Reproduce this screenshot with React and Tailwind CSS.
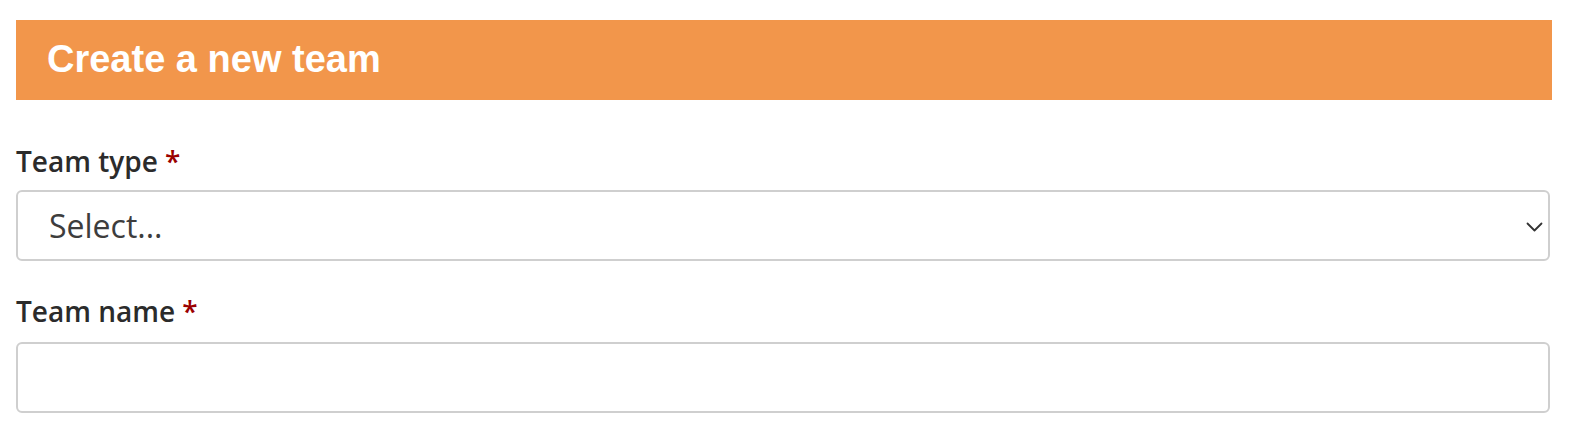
export default function App() {
  return (
    <div className="bg-white min-h-screen pt-5 pl-4 pr-[18px] font-['Open_Sans',sans-serif]">
      <div className="h-20 bg-[#f2964b] flex items-center px-[31px]">
        <h1 className="text-white text-[38px] leading-[38px] mb-[2px] font-bold font-['Liberation_Sans',sans-serif]">
          Create a new team
        </h1>
      </div>

      <div className="mt-[42px] pr-[2px]">
        <Label text="Team type" />
        <div className="mt-[10px] h-[71px] rounded-md border-2 border-[#cfcfcf] flex items-center justify-between pl-[31px] pr-[5px]">
          <span className="text-[32px] text-[#3d3d3d]">Select...</span>
          <svg width="17" height="10" viewBox="0 0 17 10" fill="none" className="mt-[2px]">
            <path d="M1.5 1.5l7 7 7-7" stroke="#333" strokeWidth="1.8" strokeLinecap="round" strokeLinejoin="round" />
          </svg>
        </div>

        <div className="mt-[31px]">
          <Label text="Team name" />
        </div>
        <div className="mt-[12px] h-[71px] rounded-md border-2 border-[#cfcfcf]" />
      </div>
    </div>
  );
}

function Label({ text }) {
  return (
    <p className="text-[28px] leading-[38px] font-semibold text-[#2b2b2b]">
      {text} <span className="text-[#9b0000]">*</span>
    </p>
  );
}
